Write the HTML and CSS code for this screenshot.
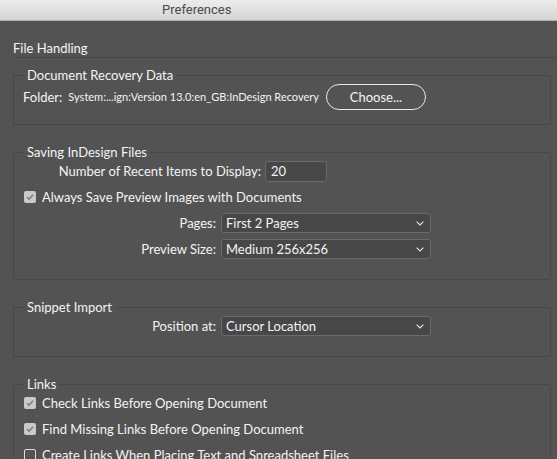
FILE: index.html
```html
<!DOCTYPE html>
<html lang="en">
<head>
<meta charset="utf-8">
<title>Preferences</title>
<link rel="stylesheet" href="styles.css">
</head>
<body>
<div class="titlebar"><span class="title">Preferences</span></div>
<main class="content">
  <h2 class="section-title">File Handling</h2>

  <fieldset class="group">
    <legend>Document Recovery Data</legend>
    <div class="folder-row">
      <span class="folder-label">Folder:</span>
      <span class="path">System:...ign:Version 13.0:en_GB:InDesign Recovery</span>
      <button class="btn-pill" type="button">Choose...</button>
    </div>
  </fieldset>

  <fieldset class="group">
    <legend>Saving InDesign Files</legend>
    <div class="rows">
      <div class="field field-num">
        <span class="field-label">Number of Recent Items to Display:</span>
        <span class="textbox">20</span>
      </div>
      <div class="check">
        <span class="box checked"><svg width="12" height="12" viewBox="0 0 12 12"><polyline points="3,6.2 5,8.2 9,3.8" fill="none" stroke="#7a7a7a" stroke-width="1.4"/></svg></span>
        <span>Always Save Preview Images with Documents</span>
      </div>
      <div class="field">
        <span class="field-label">Pages:</span>
        <span class="select"><span>First 2 Pages</span><svg class="chev" width="8" height="5" viewBox="0 0 8 5"><polyline points="0.6,0.6 4,4 7.4,0.6" fill="none" stroke="#e6e6e6" stroke-width="1.1"/></svg></span>
      </div>
      <div class="field">
        <span class="field-label">Preview Size:</span>
        <span class="select"><span>Medium 256x256</span><svg class="chev" width="8" height="5" viewBox="0 0 8 5"><polyline points="0.6,0.6 4,4 7.4,0.6" fill="none" stroke="#e6e6e6" stroke-width="1.1"/></svg></span>
      </div>
    </div>
  </fieldset>

  <fieldset class="group">
    <legend>Snippet Import</legend>
    <div class="rows">
      <div class="field">
        <span class="field-label">Position at:</span>
        <span class="select"><span>Cursor Location</span><svg class="chev" width="8" height="5" viewBox="0 0 8 5"><polyline points="0.6,0.6 4,4 7.4,0.6" fill="none" stroke="#e6e6e6" stroke-width="1.1"/></svg></span>
      </div>
    </div>
  </fieldset>

  <fieldset class="group">
    <legend>Links</legend>
    <div class="rows">
      <div class="check">
        <span class="box checked"><svg width="12" height="12" viewBox="0 0 12 12"><polyline points="3,6.2 5,8.2 9,3.8" fill="none" stroke="#7a7a7a" stroke-width="1.4"/></svg></span>
        <span>Check Links Before Opening Document</span>
      </div>
      <div class="check">
        <span class="box checked"><svg width="12" height="12" viewBox="0 0 12 12"><polyline points="3,6.2 5,8.2 9,3.8" fill="none" stroke="#7a7a7a" stroke-width="1.4"/></svg></span>
        <span>Find Missing Links Before Opening Document</span>
      </div>
      <div class="check">
        <span class="box"></span>
        <span>Create Links When Placing Text and Spreadsheet Files</span>
      </div>
    </div>
  </fieldset>
</main>
</body>
</html>
```
FILE: styles.css
```css
html, body {
  margin: 0;
  padding: 0;
}
body {
  width: 557px;
  height: 459px;
  overflow: hidden;
  background: #535353;
  color: #f4f4f4;
  font-family: Lato, "Liberation Sans", sans-serif;
  font-size: 13px;
  line-height: 20px;
}
.titlebar {
  height: 20px;
  border-bottom: 1px solid #b0b0b0;
  background: linear-gradient(#ececec, #d5d5d5);
  padding-left: 162px;
  font-family: Roboto, "Liberation Sans", sans-serif;
  font-size: 13px;
  line-height: 20px;
  color: #4b4b4b;
}
.content {
  padding: 19px 6px 0 13px;
}
.section-title {
  margin: 0 -6px 0 0;
  font-size: 13px;
  font-weight: normal;
  line-height: 16px;
  padding-bottom: 1px;
  border-bottom: 1px solid #474747;
}
.group {
  margin: 19px 0 0;
  padding: 1px 0 20px 10px;
  border: 1px solid #474747;
  border-radius: 2px;
  min-inline-size: 0;
}
.group:first-of-type {
  margin-top: 9px;
  padding-bottom: 14px;
}
.group legend {
  margin-left: 0;
  padding: 0 3px;
  line-height: 16px;
}
.folder-row {
  display: flex;
  align-items: center;
  height: 26px;
  gap: 6px;
  margin-left: -1px;
}
.path {
  font-size: 11px;
}
.btn-pill {
  flex: none;
  width: 100px;
  height: 26px;
  margin-left: 1px;
  padding: 0;
  border: 1px solid #e8e8e8;
  border-radius: 13px;
  background: transparent;
  color: #f4f4f4;
  font-family: inherit;
  font-size: 13px;
}
.rows {
  display: flex;
  flex-direction: column;
  gap: 6px;
}
.field {
  display: flex;
  align-items: center;
  height: 20px;
  gap: 5px;
}
.field-label {
  flex: none;
  width: 192px;
  text-align: right;
}
.field-num {
  gap: 4px;
}
.field-num .field-label {
  width: 237px;
}
.textbox {
  box-sizing: border-box;
  width: 62px;
  height: 21px;
  padding-left: 5px;
  border: 1px solid #6a6a6a;
  border-radius: 3px;
  background: #484848;
  line-height: 19px;
}
.select {
  box-sizing: border-box;
  display: flex;
  align-items: center;
  justify-content: space-between;
  width: 210px;
  height: 20px;
  padding: 0 6px 0 4px;
  border: 1px solid #6a6a6a;
  border-radius: 3px;
  background: #474747;
}
.chev {
  display: block;
}
.check {
  display: flex;
  align-items: center;
  height: 20px;
  gap: 6px;
}
.box {
  box-sizing: border-box;
  flex: none;
  width: 12px;
  height: 12px;
  border: 1px solid #dcdcdc;
  border-radius: 2px;
}
.box.checked {
  border: none;
  background: #c9c9c9;
}
.box svg {
  display: block;
}
```
